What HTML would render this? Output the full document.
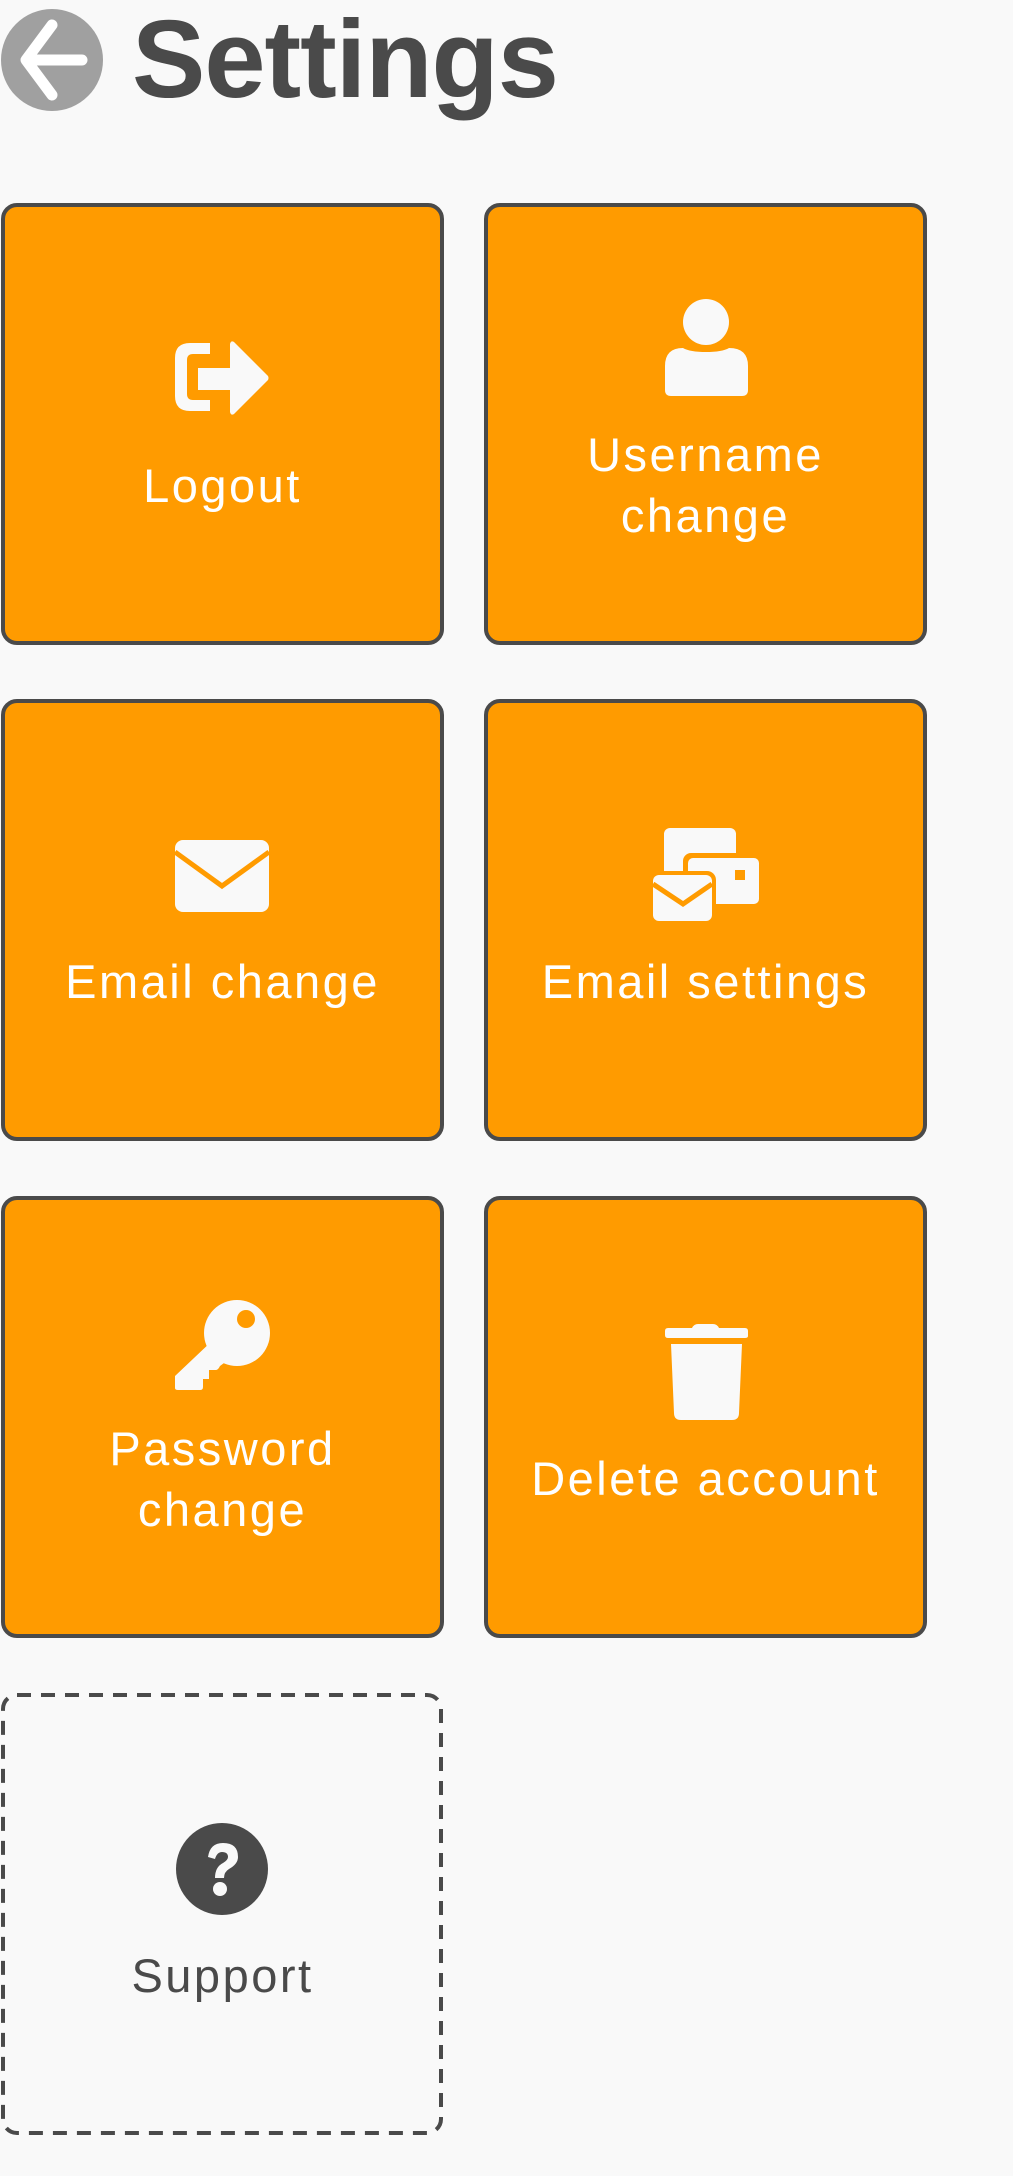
<!DOCTYPE html>
<html><head><meta charset="utf-8"><style>
html,body{margin:0;padding:0;background:#f9f9f9;}
body{width:1013px;height:2176px;position:relative;overflow:hidden;font-family:"Liberation Sans",sans-serif;}
.card{position:absolute;width:435px;height:434px;background:#ff9b00;border:4px solid #4a4a4a;border-radius:16px;}
.lbl{position:absolute;left:0;width:100%;text-align:center;color:#fff;font-size:47px;letter-spacing:2.5px;line-height:61px;}
.title{position:absolute;left:132px;top:0px;font-size:110px;font-weight:bold;color:#4a4a4a;line-height:120px;letter-spacing:-1px;}
svg.ov{position:absolute;left:0;top:0;}
</style></head><body>
<div class="title">Settings</div>
<div class="card" style="left:1px;top:203px"><div class="lbl" style="top:248px">Logout</div></div>
<div class="card" style="left:484px;top:203px"><div class="lbl" style="top:217px">Username<br>change</div></div>
<div class="card" style="left:1px;top:699px"><div class="lbl" style="top:248px">Email change</div></div>
<div class="card" style="left:484px;top:699px"><div class="lbl" style="top:248px">Email settings</div></div>
<div class="card" style="left:1px;top:1196px"><div class="lbl" style="top:218px">Password<br>change</div></div>
<div class="card" style="left:484px;top:1196px"><div class="lbl" style="top:248px">Delete account</div></div>
<div class="card" style="left:1px;top:1693px;background:none;border:4px solid transparent;"><div class="lbl" style="top:248px;color:#4a4a4a">Support</div></div>
<svg class="ov" width="1013" height="2176" viewBox="0 0 1013 2176">
<rect x="3" y="1695" width="438" height="438" rx="14" fill="none" stroke="#4a4a4a" stroke-width="4" stroke-dasharray="14 10"/>
<circle cx="52" cy="60" r="51" fill="#a0a0a0"/>
<path d="M52 25 L26 60 L52 95 M28 60 H82" stroke="#fff" stroke-width="11" fill="none" stroke-linecap="round" stroke-linejoin="round"/>
<g fill="#f9f9f9">
<path d="M210 343 H190 Q175 343 175 358 V396 Q175 411 190 411 H210 V400 H193 Q187 400 187 394 V360 Q187 354 193 354 H210 Z"/>
<path d="M198 368 H230 V344 Q231 340 234 342 L268 376 Q269 378 268 380 L234 414 Q231 416 230 412 V390 H198 Z"/>
<circle cx="706" cy="322" r="23"/>
<path d="M665 366 Q665 348 683 348 Q690 352 706 352 Q722 352 729 348 Q748 348 748 366 V390 Q748 396 742 396 H671 Q665 396 665 390 Z"/>
<rect x="175" y="840" width="94" height="72" rx="8"/>
<path d="M175 852 L222 886 L269 852" stroke="#ff9b00" stroke-width="5" fill="none"/>
<rect x="664" y="828" width="72" height="50" rx="6"/>
<rect x="683" y="853" width="80" height="55" rx="8" fill="#ff9b00"/>
<rect x="688" y="858" width="71" height="46" rx="5"/>
<rect x="735" y="870" width="10" height="10" fill="#ff9b00"/>
<rect x="649" y="871" width="67" height="54" rx="9" fill="#ff9b00"/>
<rect x="653" y="875" width="59" height="46" rx="6"/>
<path d="M653 884 L683 904 L712 884" stroke="#ff9b00" stroke-width="5" fill="none"/>
<circle cx="237" cy="1333" r="33"/>
<path d="M213 1340 L175 1376 V1388 Q175 1390 178 1390 H200 Q203 1390 203 1387 V1379 H209 V1370 H216 Q218 1370 220 1366 L228 1360 Z"/>
<circle cx="246" cy="1319" r="9" fill="#ff9b00"/>
<path d="M692 1328 Q694 1324 698 1324 H713 Q717 1324 719 1328 H745 Q748 1328 748 1331 V1336 Q748 1338 745 1338 H668 Q665 1338 665 1335 V1331 Q665 1328 668 1328 Z"/>
<path d="M671 1344 H742 L739 1413 Q739 1420 732 1420 H681 Q674 1420 674 1413 Z"/>
</g>
<circle cx="222" cy="1869" r="46" fill="#4a4a4a"/>
<path d="M208 1857 Q210 1843 223 1843 Q238 1843 238 1857 Q238 1864 229 1869 Q224 1872 224 1878 H215 Q215 1867 223 1863 Q228 1860 228 1857 Q228 1852 222 1852 Q217 1852 215 1859 Z" fill="#f9f9f9"/>
<circle cx="220" cy="1889" r="7" fill="#f9f9f9"/>
</svg>
</body></html>
